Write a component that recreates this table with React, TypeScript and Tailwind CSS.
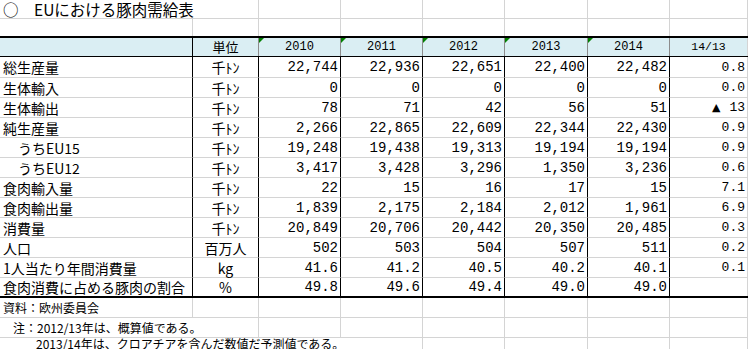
import React from "react";

const JP = "font-['Noto_Sans_CJK_JP',sans-serif]";
const NUM = "font-['Liberation_Mono','Noto_Sans_CJK_JP',monospace]";
const GRID =
  "grid grid-cols-[193px_66px_82px_82px_82px_83px_82px_78px] w-[748px]";

type Row = {
  label: string;
  indent?: boolean;
  unit: string;
  vals: string[];
  ratio: string;
};

const rows: Row[] = [
  { label: "総生産量", unit: "千ﾄﾝ", vals: ["22,744", "22,936", "22,651", "22,400", "22,482"], ratio: "0.8" },
  { label: "生体輸入", unit: "千ﾄﾝ", vals: ["0", "0", "0", "0", "0"], ratio: "0.0" },
  { label: "生体輸出", unit: "千ﾄﾝ", vals: ["78", "71", "42", "56", "51"], ratio: "▲13" },
  { label: "純生産量", unit: "千ﾄﾝ", vals: ["2,266", "22,865", "22,609", "22,344", "22,430"], ratio: "0.9" },
  { label: "うちEU15", indent: true, unit: "千ﾄﾝ", vals: ["19,248", "19,438", "19,313", "19,194", "19,194"], ratio: "0.9" },
  { label: "うちEU12", indent: true, unit: "千ﾄﾝ", vals: ["3,417", "3,428", "3,296", "1,350", "3,236"], ratio: "0.6" },
  { label: "食肉輸入量", unit: "千ﾄﾝ", vals: ["22", "15", "16", "17", "15"], ratio: "7.1" },
  { label: "食肉輸出量", unit: "千ﾄﾝ", vals: ["1,839", "2,175", "2,184", "2,012", "1,961"], ratio: "6.9" },
  { label: "消費量", unit: "千ﾄﾝ", vals: ["20,849", "20,706", "20,442", "20,350", "20,485"], ratio: "0.3" },
  { label: "人口", unit: "百万人", vals: ["502", "503", "504", "507", "511"], ratio: "0.2" },
  { label: "1人当たり年間消費量", unit: "kg", vals: ["41.6", "41.2", "40.5", "40.2", "40.1"], ratio: "0.1" },
  { label: "食肉消費に占める豚肉の割合", unit: "%", vals: ["49.8", "49.6", "49.4", "49.0", "49.0"], ratio: "" },
];

const years = ["2010", "2011", "2012", "2013", "2014"];

function EmptyCells({ n }: { n: number }) {
  return (
    <>
      {Array.from({ length: n }).map((_, i) => (
        <div key={i} className="border-r border-[#d4d4d4]" />
      ))}
    </>
  );
}

export default function App() {
  return (
    <div className={`w-[748px] h-[349px] overflow-hidden bg-white text-black ${JP}`}>
      {/* Title row */}
      <div className={`${GRID} h-[19px] border-b border-[#d4d4d4]`}>
        <div className="col-span-2 border-r border-[#d4d4d4] flex items-center pl-[3px] text-[15.5px] leading-[18px] whitespace-nowrap">
          ○　EUにおける豚肉需給表
        </div>
        <EmptyCells n={6} />
      </div>
      {/* Empty row */}
      <div className={`${GRID} h-[17px]`}>
        <EmptyCells n={8} />
      </div>
      <div className="w-[748px] h-[2px] bg-black" />

      {/* Header */}
      <div className={`${GRID} h-[19px] bg-[#daeef3] border-b border-black`}>
        <div className="border-r border-black" />
        <div className="border-r border-[#8c8c8c] flex items-center justify-center text-[13px] leading-[18px]">
          単位
        </div>
        {years.map((y) => (
          <div
            key={y}
            className={`relative border-r border-[#8c8c8c] flex items-center justify-center text-[12px] leading-[18px] ${NUM}`}
          >
            <span className="absolute top-0 left-0 w-[5px] h-[5px] bg-[#008000] [clip-path:polygon(0_0,100%_0,0_100%)]" />
            {y}
          </div>
        ))}
        <div className={`border-r border-[#d4d4d4] flex items-center justify-center text-[11.5px] leading-[18px] ${NUM}`}>
          14/13
        </div>
      </div>

      {/* Data rows */}
      {rows.map((r, i) => {
        const last = i === rows.length - 1;
        const h = i === 0 ? "h-[21px]" : last ? "h-[18px]" : "h-[20px]";
        const bb = last ? "" : "border-b border-b-[#d4d4d4]";
        return (
          <div key={r.label} className={`${GRID} ${h}`}>
            <div
              className={`border-r border-r-black ${bb} flex items-center text-[14px] leading-none whitespace-nowrap ${
                r.indent ? "pl-[18px]" : "pl-[3px]"
              }`}
            >
              {r.label}
            </div>
            <div className={`border-r border-r-black ${bb} flex items-center justify-center text-[14px] leading-none`}>
              {r.unit}
            </div>
            {r.vals.map((v, j) => (
              <div
                key={j}
                className={`border-r border-r-black ${bb} flex items-center justify-end pr-[2px] text-[14px] leading-none ${NUM}`}
              >
                {v}
              </div>
            ))}
            <div
              className={`border-r border-r-[#d4d4d4] ${bb} flex items-center justify-end pr-[2px] text-[13px] leading-none ${NUM}`}
            >
              {r.ratio.startsWith("▲") ? (
                <>
                  <span className="font-['DejaVu_Sans',sans-serif] text-[11px] mr-[9px]">▲</span>
                  <span>{r.ratio.slice(1)}</span>
                </>
              ) : (
                r.ratio
              )}
            </div>
          </div>
        );
      })}
      <div className="w-[748px] h-[2px] bg-black" />

      {/* Notes */}
      <div className={`${GRID} h-[20px] border-b border-[#d4d4d4]`}>
        <div className="border-r border-[#d4d4d4] flex items-center pl-[3px] text-[12px] leading-none whitespace-nowrap">
          資料：欧州委員会
        </div>
        <EmptyCells n={7} />
      </div>
      <div className={`${GRID} h-[20px] border-b border-[#d4d4d4]`}>
        <div className="col-span-2 border-r border-[#d4d4d4] flex items-center pl-[13px] text-[12px] leading-none whitespace-nowrap">
          注：2012/13年は、概算値である。
        </div>
        <EmptyCells n={6} />
      </div>
      <div className={`${GRID} h-[11px]`}>
        <div className="col-span-4 border-r border-[#d4d4d4] flex items-start pl-[36px] text-[12px] leading-[11px] whitespace-nowrap">
          2013/14年は、クロアチアを含んだ数値だ予測値である。
        </div>
        <EmptyCells n={4} />
      </div>
    </div>
  );
}
